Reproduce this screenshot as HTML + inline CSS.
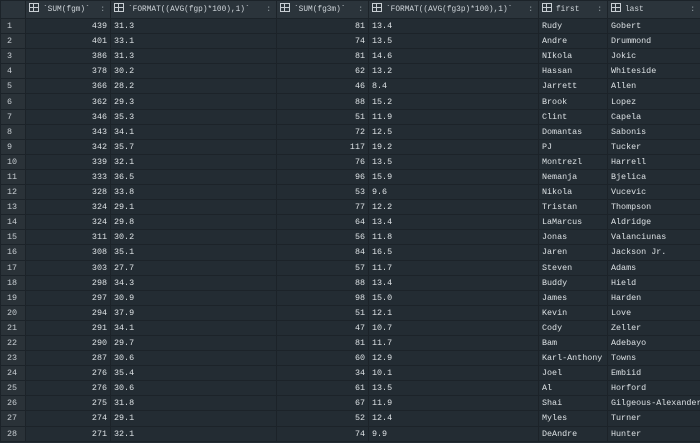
<!DOCTYPE html>
<html><head><style>
body{margin:0;width:700px;height:443px;overflow:hidden;background:#232c33;font-family:"Liberation Mono","DejaVu Sans Mono",monospace;font-size:8.4px;color:#dde2e5}
table{border-collapse:collapse;table-layout:fixed;width:700px}
td,th{border:1px solid #1c2329;height:14.1px;padding:0 3px;white-space:nowrap;overflow:hidden;line-height:14px}
th{height:17px;background:#2b343b;font-weight:normal;text-align:left;color:#cfd5da;position:relative;font-size:7.8px}
td.n{background:#2a3238;text-align:left;padding-left:6px;color:#c8ced3}
td.r{text-align:right}
.ic{display:inline-block;width:8px;height:7px;border:1px solid #c8ced3;margin-right:4px;vertical-align:-1px;background:linear-gradient(#c8ced3,#c8ced3) 3px 0/1px 100% no-repeat,linear-gradient(#c8ced3,#c8ced3) 0 3px/100% 1px no-repeat}
.c{position:absolute;right:5px;top:2px;color:#9aa3aa}
</style></head><body>
<table>
<colgroup><col style="width:25px"><col style="width:85px"><col style="width:166px"><col style="width:92px"><col style="width:170px"><col style="width:69px"><col style="width:93px"></colgroup>
<tr><th></th><th><span class="ic"></span>`SUM(fgm)`<span class="c">:</span></th><th><span class="ic"></span>`FORMAT((AVG(fgp)*100),1)`<span class="c">:</span></th><th><span class="ic"></span>`SUM(fg3m)`<span class="c">:</span></th><th><span class="ic"></span>`FORMAT((AVG(fg3p)*100),1)`<span class="c">:</span></th><th><span class="ic"></span>first<span class="c">:</span></th><th><span class="ic"></span>last<span class="c">:</span></th></tr>
<tr><td class="n">1</td><td class="r">439</td><td>31.3</td><td class="r">81</td><td>13.4</td><td>Rudy</td><td>Gobert</td></tr>
<tr><td class="n">2</td><td class="r">401</td><td>33.1</td><td class="r">74</td><td>13.5</td><td>Andre</td><td>Drummond</td></tr>
<tr><td class="n">3</td><td class="r">386</td><td>31.3</td><td class="r">81</td><td>14.6</td><td>NIkola</td><td>Jokic</td></tr>
<tr><td class="n">4</td><td class="r">378</td><td>30.2</td><td class="r">62</td><td>13.2</td><td>Hassan</td><td>Whiteside</td></tr>
<tr><td class="n">5</td><td class="r">366</td><td>28.2</td><td class="r">46</td><td>8.4</td><td>Jarrett</td><td>Allen</td></tr>
<tr><td class="n">6</td><td class="r">362</td><td>29.3</td><td class="r">88</td><td>15.2</td><td>Brook</td><td>Lopez</td></tr>
<tr><td class="n">7</td><td class="r">346</td><td>35.3</td><td class="r">51</td><td>11.9</td><td>Clint</td><td>Capela</td></tr>
<tr><td class="n">8</td><td class="r">343</td><td>34.1</td><td class="r">72</td><td>12.5</td><td>Domantas</td><td>Sabonis</td></tr>
<tr><td class="n">9</td><td class="r">342</td><td>35.7</td><td class="r">117</td><td>19.2</td><td>PJ</td><td>Tucker</td></tr>
<tr><td class="n">10</td><td class="r">339</td><td>32.1</td><td class="r">76</td><td>13.5</td><td>Montrezl</td><td>Harrell</td></tr>
<tr><td class="n">11</td><td class="r">333</td><td>36.5</td><td class="r">96</td><td>15.9</td><td>Nemanja</td><td>Bjelica</td></tr>
<tr><td class="n">12</td><td class="r">328</td><td>33.8</td><td class="r">53</td><td>9.6</td><td>Nikola</td><td>Vucevic</td></tr>
<tr><td class="n">13</td><td class="r">324</td><td>29.1</td><td class="r">77</td><td>12.2</td><td>Tristan</td><td>Thompson</td></tr>
<tr><td class="n">14</td><td class="r">324</td><td>29.8</td><td class="r">64</td><td>13.4</td><td>LaMarcus</td><td>Aldridge</td></tr>
<tr><td class="n">15</td><td class="r">311</td><td>30.2</td><td class="r">56</td><td>11.8</td><td>Jonas</td><td>Valanciunas</td></tr>
<tr><td class="n">16</td><td class="r">308</td><td>35.1</td><td class="r">84</td><td>16.5</td><td>Jaren</td><td>Jackson Jr.</td></tr>
<tr><td class="n">17</td><td class="r">303</td><td>27.7</td><td class="r">57</td><td>11.7</td><td>Steven</td><td>Adams</td></tr>
<tr><td class="n">18</td><td class="r">298</td><td>34.3</td><td class="r">88</td><td>13.4</td><td>Buddy</td><td>Hield</td></tr>
<tr><td class="n">19</td><td class="r">297</td><td>30.9</td><td class="r">98</td><td>15.0</td><td>James</td><td>Harden</td></tr>
<tr><td class="n">20</td><td class="r">294</td><td>37.9</td><td class="r">51</td><td>12.1</td><td>Kevin</td><td>Love</td></tr>
<tr><td class="n">21</td><td class="r">291</td><td>34.1</td><td class="r">47</td><td>10.7</td><td>Cody</td><td>Zeller</td></tr>
<tr><td class="n">22</td><td class="r">290</td><td>29.7</td><td class="r">81</td><td>11.7</td><td>Bam</td><td>Adebayo</td></tr>
<tr><td class="n">23</td><td class="r">287</td><td>30.6</td><td class="r">60</td><td>12.9</td><td>Karl-Anthony</td><td>Towns</td></tr>
<tr><td class="n">24</td><td class="r">276</td><td>35.4</td><td class="r">34</td><td>10.1</td><td>Joel</td><td>Embiid</td></tr>
<tr><td class="n">25</td><td class="r">276</td><td>30.6</td><td class="r">61</td><td>13.5</td><td>Al</td><td>Horford</td></tr>
<tr><td class="n">26</td><td class="r">275</td><td>31.8</td><td class="r">67</td><td>11.9</td><td>Shai</td><td>Gilgeous-Alexander</td></tr>
<tr><td class="n">27</td><td class="r">274</td><td>29.1</td><td class="r">52</td><td>12.4</td><td>Myles</td><td>Turner</td></tr>
<tr><td class="n">28</td><td class="r">271</td><td>32.1</td><td class="r">74</td><td>9.9</td><td>DeAndre</td><td>Hunter</td></tr>
</table>
</body></html>
